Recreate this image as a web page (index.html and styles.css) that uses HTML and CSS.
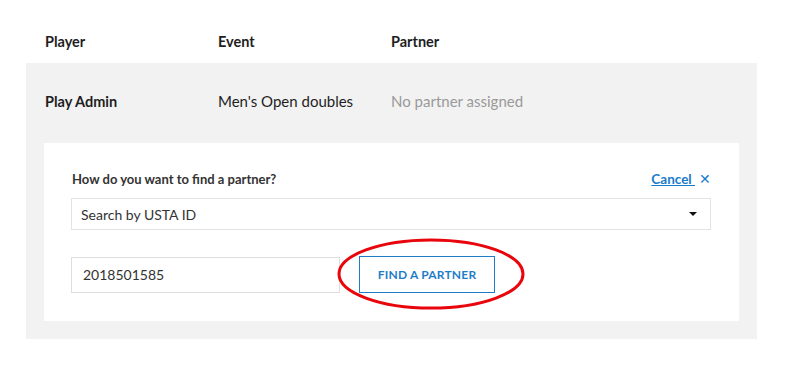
FILE: index.html
```html
<!DOCTYPE html>
<html lang="en">
<head>
    <meta charset="UTF-8">
    <title>Find a partner</title>
    <link rel="stylesheet" href="styles.css">
</head>
<body>
    <div class="table">
        <div class="head">
            <div class="col">Player</div>
            <div class="col">Event</div>
            <div class="col">Partner</div>
        </div>
        <div class="panel">
            <div class="row">
                <div class="col name">Play Admin</div>
                <div class="col">Men's Open doubles</div>
                <div class="col muted">No partner assigned</div>
            </div>
            <div class="finder">
                <div class="finder-top">
                    <label class="question">How do you want to find a partner?</label>
                    <a href="#" class="cancel">Cancel <span class="x">&#x2715;</span></a>
                </div>
                <div class="select">
                    <span>Search by USTA ID</span>
                    <span class="caret"></span>
                </div>
                <div class="search">
                    <input type="text" class="id-input" value="2018501585">
                    <div class="btn-wrap">
                        <button class="find">FIND A PARTNER</button>
                        <!-- annotation circle -->
                        <svg class="ring" width="190" height="74" viewBox="0 0 190 74">
                            <ellipse cx="95" cy="37" rx="92" ry="34" fill="none" stroke="#e8050c" stroke-width="3"/>
                        </svg>
                    </div>
                </div>
            </div>
        </div>
    </div>
</body>
</html>
```

FILE: styles.css
```css
body{
    margin: 0;
    font-family: Lato, "Open Sans", sans-serif;
    color: #1e1e1e;
    background: #fff;
}
.table{
    width: 731px;
    margin-left: 26px;
}
.head, .row{
    display: grid;
    grid-template-columns: 173px 173px 1fr;
    padding-left: 19px;
    font-size: 15px;
}
.head{
    height: 63px;
    box-sizing: border-box;
    padding-top: 20px;
    align-items: center;
    font-weight: 700;
    font-size: 14.5px;
}
.panel{
    background: #f2f2f2;
    padding: 0 18px 18px;
}
.row{
    height: 80px;
    box-sizing: border-box;
    padding-left: 1px;
    padding-bottom: 4px;
    align-items: center;
}
.name{
    font-weight: 700;
    font-size: 14.5px;
}
.muted{
    color: #999;
}
.finder{
    background: #fff;
    padding: 28px 28px 28px 27px;
}
.finder-top{
    display: flex;
    justify-content: space-between;
    align-items: center;
    font-size: 13px;
    margin-bottom: 11px;
}
.question{
    font-weight: 700;
    color: #333;
    padding-left: 1px;
}
.cancel{
    color: #1a7bc9;
    font-weight: 700;
    text-decoration: underline;
    font-size: 13.5px;
}
.cancel .x{
    display: inline-block;
    text-decoration: none;
    font-weight: 400;
    margin-left: 4px;
}
.select{
    display: flex;
    justify-content: space-between;
    align-items: center;
    height: 30px;
    border: 1px solid #e3e3e3;
    padding: 0 13px 0 9px;
    font-size: 14px;
    color: #333;
}
.caret{
    width: 0;
    height: 0;
    border-left: 4px solid transparent;
    border-right: 4px solid transparent;
    border-top: 4px solid #111;
}
.search{
    display: flex;
    align-items: center;
    margin-top: 26px;
    gap: 19px;
}
.id-input{
    width: 269px;
    height: 36px;
    box-sizing: border-box;
    border: 1px solid #dedede;
    padding: 0 11px;
    font-family: inherit;
    font-size: 14px;
    color: #333;
}
.btn-wrap{
    position: relative;
    display: flex;
}
.find{
    width: 136px;
    height: 37px;
    background: #fff;
    border: 1px solid #1f7dc8;
    color: #1f7dc8;
    font-family: inherit;
    font-weight: 700;
    font-size: 12px;
    letter-spacing: 0.2px;
}
.ring{
    position: absolute;
    left: -23px;
    top: -19px;
}
```
